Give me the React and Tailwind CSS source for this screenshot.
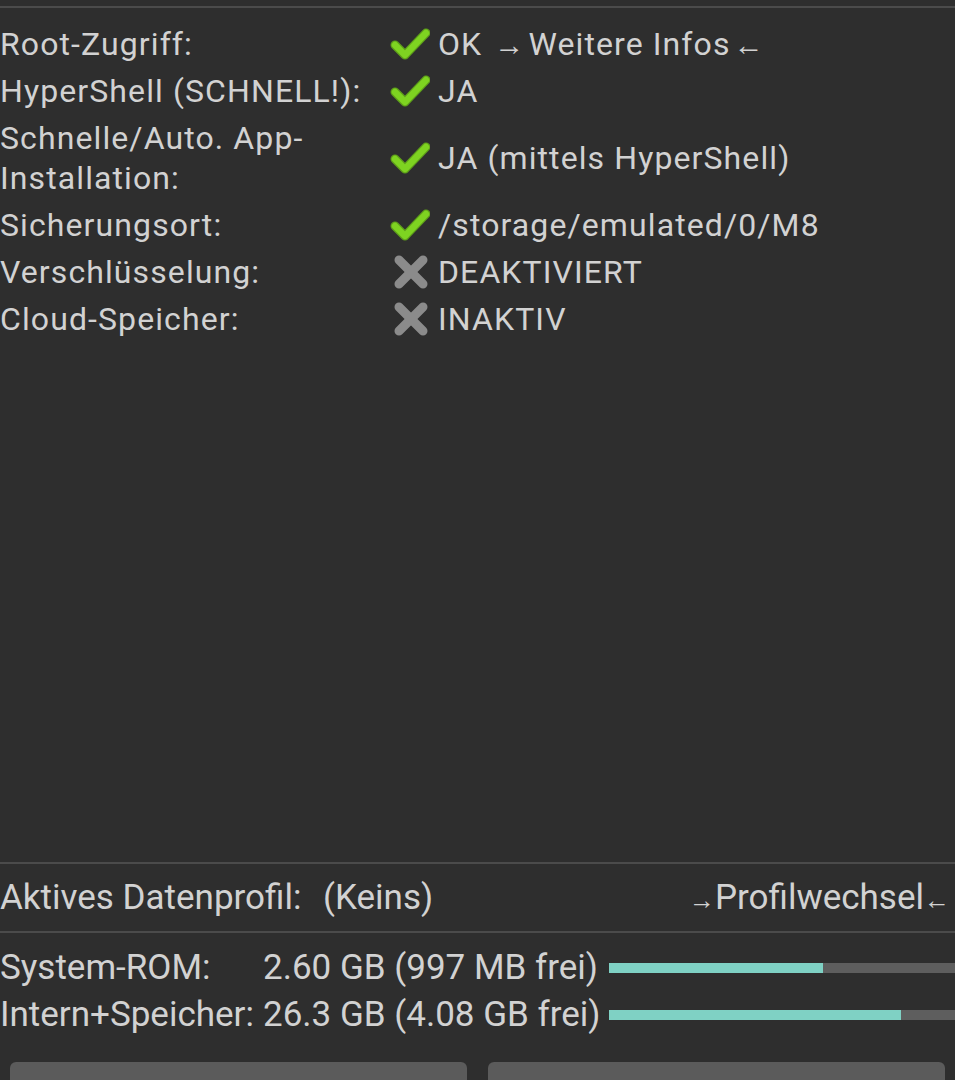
import { Fragment } from 'react';

const font = { fontFamily: 'Roboto, "Noto Sans", sans-serif' };

function Check() {
  return (
    <svg width="40" height="32" viewBox="0 0 40 32" className="shrink-0">
      <polyline points="5,17 15,27 36,5" fill="none" stroke="#5e9e1a" strokeWidth="9" strokeLinecap="round" strokeLinejoin="round" />
      <polyline points="5,17 15,27 36,5" fill="none" stroke="#7ed321" strokeWidth="6.5" strokeLinecap="round" strokeLinejoin="round" />
    </svg>
  );
}

function Cross() {
  return (
    <svg width="40" height="34" viewBox="0 0 40 34" className="shrink-0">
      <g stroke="#8b8b8b" strokeWidth="9" strokeLinecap="round">
        <line x1="9" y1="5" x2="33" y2="29" />
        <line x1="33" y1="5" x2="9" y2="29" />
      </g>
    </svg>
  );
}

const Arrow = ({ children, big }) => (
  <span className={big ? 'text-[30px] leading-none mx-[3px]' : 'text-[26px] leading-none'}>{children}</span>
);

const rows = [
  { label: 'Root-Zugriff:', ok: true, value: <>OK <Arrow big>→</Arrow>Weitere Infos<Arrow big>←</Arrow></> },
  { label: 'HyperShell (SCHNELL!):', ok: true, value: 'JA' },
  { label: <>Schnelle/Auto. App-<br />Installation:</>, ok: true, value: 'JA (mittels HyperShell)' },
  { label: 'Sicherungsort:', ok: true, value: '/storage/emulated/0/M8' },
  { label: 'Verschlüsselung:', ok: false, value: 'DEAKTIVIERT' },
  { label: 'Cloud-Speicher:', ok: false, value: 'INAKTIV' },
];

const storage = [
  { label: 'System-ROM:', value: '2.60 GB (997 MB frei)', used: 60 },
  { label: 'Intern+Speicher:', value: '26.3 GB (4.08 GB frei)', used: 82 },
];

export default function App() {
  return (
    <div className="w-[955px] h-[1080px] overflow-hidden bg-[#2e2e2e] text-[#d2d2d2] flex flex-col" style={font}>
      <div className="h-[862px] shrink-0 flex flex-col">
        <div className="mt-[6px] h-[2px] bg-[#4b4b4b]" />
        <div className="pt-[12px] grid grid-cols-[390px_1fr] text-[32px] leading-[40px] tracking-[1.1px]">
          {rows.map((r, i) => (
            <Fragment key={i}>
              <div className="py-[3.5px] flex items-center">{r.label}</div>
              <div className="py-[3.5px] flex items-center gap-[8px]">
                {r.ok ? <Check /> : <Cross />}
                <span>{r.value}</span>
              </div>
            </Fragment>
          ))}
        </div>
      </div>

      <div className="shrink-0 h-[2px] bg-[#4b4b4b]" />
      <div className="shrink-0 h-[67px] flex items-center text-[35px] leading-[40px]">
        <span className="w-[323px]">Aktives Datenprofil:</span>
        <span>(Keins)</span>
        <span className="ml-auto mr-[5px]"><Arrow>→</Arrow>Profilwechsel<Arrow>←</Arrow></span>
      </div>
      <div className="shrink-0 h-[2px] bg-[#4b4b4b]" />

      <div className="shrink-0 pt-[11px] text-[35px] leading-[40px]">
        {storage.map((s) => (
          <div key={s.label} className="h-[47px] flex items-center">
            <span className="w-[263px] shrink-0">{s.label}</span>
            <span className="w-[346px] shrink-0">{s.value}</span>
            <div className="flex-1 h-[10px] bg-[#5e5e5e] mr-[-10px]">
              <div className="h-full bg-[#7fd1c4]" style={{ width: `${s.used}%` }} />
            </div>
          </div>
        ))}
      </div>

      <div className="shrink-0 mt-[24px] flex gap-[21px] px-[10px]">
        <div className="flex-1 h-[60px] rounded-[6px] bg-[#5b5b5b]" />
        <div className="flex-1 h-[60px] rounded-[6px] bg-[#5b5b5b]" />
      </div>
    </div>
  );
}
